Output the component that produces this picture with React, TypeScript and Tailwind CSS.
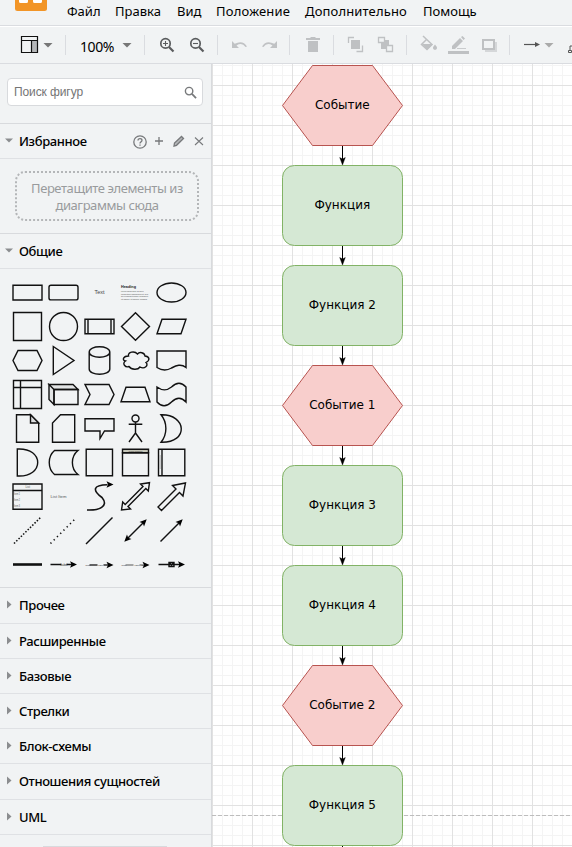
import React from "react";

const menus = [
  { label: "Файл", cls: "w-[48px]" },
  { label: "Правка", cls: "w-[62px]" },
  { label: "Вид", cls: "w-[39px]" },
  { label: "Положение", cls: "w-[89px] tracking-[0.2px]" },
  { label: "Дополнительно", cls: "w-[118px] tracking-[0.15px]" },
  { label: "Помощь", cls: "w-[70px]" },
];

function MenuBar() {
  return (
    <header className="flex h-[27px] shrink-0 border-b border-white bg-[#f1f3f4]">
      <div className="flex w-full border-b border-[#dadce0]">
        <svg width="67" height="25" className="shrink-0">
          <path d="M15 0H47V8.500Q47 11 44.500 11H17.500Q15 11 15 8.500Z" fill="#f29527" />
          <path d="M19 0H28V1.500Q28 3 26.500 3H20.500Q19 3 19 1.500ZM33 0H42V1.500Q42 3 40.500 3H34.500Q33 3 33 1.500Z" fill="#fff" />
        </svg>
        {menus.map((m) => (
          <span key={m.label} className={"shrink-0 whitespace-nowrap text-[13px] leading-[23px] text-black " + m.cls}>
            {m.label}
          </span>
        ))}
      </div>
    </header>
  );
}

function Tool({ x, w, children }: { x: number; w: number; children: React.ReactNode }) {
  return (
    <svg width={w} height="36" viewBox={`${x} 27 ${w} 36`} className="shrink-0" fill="none">
      {children}
    </svg>
  );
}

function Divider() {
  return <div className="mt-2 h-5 w-px shrink-0 bg-[#dadce0]" />;
}

function Magnifier({ cx, plus }: { cx: number; plus?: boolean }) {
  return (
    <g stroke="#5a5c5e">
      <circle cx={cx} cy="43.400" r="4.700" strokeWidth="1.700" />
      <path d={`M${cx + 3.5} 47L${cx + 8} 51.500`} strokeWidth="2.200" />
      <path d={`M${cx - 2.5} 43.500h5` + (plus ? `M${cx} 41v5` : "")} strokeWidth="1.100" />
    </g>
  );
}

function Toolbar() {
  return (
    <div className="flex h-[37px] shrink-0 overflow-hidden border-b border-[#dadce0] bg-[#f1f3f4]">
      <Tool x={0} w={65}>
        <path d="M32 41H37V52H32Z" fill="#b4b6b8" />
        <path d="M21.500 36.500H37.500V52.500H21.500ZM21.500 40.500H37.500M31.500 40.500V52.500" stroke="#111" strokeWidth="1.200" />
        <path d="M43.500 43H52.500L48 47.500Z" fill="#777" />
      </Tool>
      <Divider />
      <span className="w-[56px] shrink-0 pl-[14px] text-[14px] leading-[39px] tracking-[-0.4px] text-black">100%</span>
      <Tool x={122} w={22}>
        <path d="M122.500 43H131.500L127 47.500Z" fill="#777" />
      </Tool>
      <Divider />
      <Tool x={145} w={72}>
        <Magnifier cx={165.5} plus />
        <Magnifier cx={195.5} />
      </Tool>
      <Divider />
      <Tool x={218} w={71}>
        <path d="M232 41V48H239L236.500 45.500Q242 42 245.500 47L247 46.500Q243 39.500 234.700 43.700Z" fill="#c0c2c4" />
        <path d="M277 41V48H270L272.500 45.500Q267 42 263.500 47L262 46.500Q266 39.500 274.300 43.700Z" fill="#c0c2c4" />
      </Tool>
      <Divider />
      <Tool x={290} w={43}>
        <path d="M306 38H310L311 37H315L316 38H320V40H306ZM308 41H318V52H308Z" fill="#bfc1c3" />
      </Tool>
      <Divider />
      <Tool x={334} w={72}>
        <path d="M351 40H360V49H351Z" fill="#bfc1c3" />
        <path d="M348.500 43V37.500H354M356.500 51.500H362.500V45.500" stroke="#bfc1c3" strokeWidth="1.300" />
        <path d="M381 40H389V49H381Z" fill="#bfc1c3" />
        <path d="M378.500 37.500H384.500V42.500H378.500ZM386.500 45.500H392.500V51.500H386.500Z" fill="#f1f3f4" stroke="#bfc1c3" strokeWidth="1.300" />
      </Tool>
      <Divider />
      <Tool x={407} w={102}>
        <path d="M423 36L432 44.500L427 49.500L421.500 44.500L427 39" stroke="#bfc1c3" strokeWidth="1.500" />
        <path d="M422 44H433L427 50Z" fill="#bfc1c3" />
        <path d="M435 44.500Q439 49 435 50Q431 49 435 44.500Z" fill="#bfc1c3" />
        <path d="M452 49V46L460 38L463 41L455 49ZM461 37L462.500 36L465 38.500L463.500 40Z" fill="#bfc1c3" />
        <path d="M457 48.500H466" stroke="#c9cbcd" />
        <path d="M448 51H469V54H448Z" fill="#bfc1c3" />
        <path d="M485 42H497V52H485Z" fill="#d5d7d9" />
        <path d="M483 40H494V49H483Z" fill="#f1f3f4" stroke="#bfc1c3" strokeWidth="2" />
      </Tool>
      <Divider />
      <Tool x={510} w={62}>
        <path d="M524 44.500H536" stroke="#555" strokeWidth="1.200" />
        <path d="M535 42L540 44.500L535 47Z" fill="#555" />
        <path d="M544.500 43H553.500L549 47.500Z" fill="#aaa" />
        <path d="M568.500 50.500H571.500V52.500H568.500ZM570 50V46H573" stroke="#555" />
      </Tool>
    </div>
  );
}

function Tiny({ x, y, size, children, w, bold }: { x: number; y: number; size: number; children: string; w?: number; bold?: boolean }) {
  return (
    <text x={x} y={y} fontSize={size} textLength={w} lengthAdjust="spacingAndGlyphs" fill="#222" stroke="none" fontFamily="Liberation Sans, sans-serif" fontWeight={bold ? 700 : 400}>
      {children}
    </text>
  );
}

const head = (x: number, y: number, a: number) => (
  <path d="M1 0L-6 3.200L-4.500 0L-6 -3.200Z" fill="#000" stroke="none" transform={`translate(${x} ${y}) rotate(${a})`} />
);

const shapes: React.ReactNode[] = [
  <path d="M-14.500 -7.200H14.500V7.500H-14.500Z" />,
  <rect x="-14.500" y="-7.200" width="29" height="14.600" rx="2" />,
  <g opacity="0.85"><Tiny x={-5} y={1.5} size={5} w={10}>Text</Tiny></g>,
  <g>
    <Tiny x={-14.5} y={-4.8} size={4.4} w={15} bold>Heading</Tiny>
    <g opacity="0.8">
      <Tiny x={-14.5} y={-0.5} size={2.4} w={23}>Lorem ipsum dolor sit amet,</Tiny>
      <Tiny x={-14.5} y={2} size={2.4} w={27}>consectetur adipisicing elit, sed</Tiny>
      <Tiny x={-14.5} y={4.8} size={2.4} w={27}>do eiusmod tempor incididunt</Tiny>
      <Tiny x={-14.5} y={7} size={2.4} w={26}>ut labore et dolore magna</Tiny>
    </g>
  </g>,
  <ellipse rx="14.500" ry="9.500" />,

  <path d="M-14 -14H14V14H-14Z" />,
  <circle r="14" />,
  <path d="M-14.500 -7.300H14.500V7.300H-14.500ZM-11.500 -7.300V7.300M11.500 -7.300V7.300" />,
  <path d="M0 -13.700L14 0L0 13.700L-14 0Z" />,
  <path d="M-9.500 -7.300H14.500L9.500 7.300H-14.500Z" />,

  <path d="M-9.500 -10H9.500L14.500 0L9.500 10H-9.500L-14.500 0Z" />,
  <path d="M-10.200 -14L10.500 0L-10.200 14Z" />,
  <path d="M-10.300 -8.500V8.500C-10.300 15.500 10.300 15.500 10.300 8.500V-8.500C10.300 -15.500 -10.300 -15.500 -10.300 -8.500C-10.300 -1.500 10.300 -1.500 10.300 -8.500" />,
  <path d="M-7 -4.500C-12 -4.500 -14 -0.500 -10 0.500C-14 3 -10 7.500 -6.500 6C-4 9.500 2.500 9.500 4.500 6.500C9 9 13.500 5 10.500 2C15 -0.500 14 -4 9.500 -4.500C9 -8 4 -9 2 -6.500C-1 -10 -8 -8.500 -7 -4.500Z" />,
  <path d="M-14.500 -9.500H14.500V7C9.500 3 5 5 0 7.500C-5 10.500 -10 10 -14.500 7Z" />,

  <path d="M-14 -14H14V14H-14ZM-7 -14V14M-14 -7H14" />,
  <g>
    <path d="M-14.500 -10L-9.500 -5V10L-14.500 5ZM-14.500 -10H9.500L14.500 -5H-9.500Z" fill="#e2e4e5" />
    <path d="M-9.500 -5H14.500V10H-9.500Z" />
  </g>,
  <path d="M-14.500 -10H9.500L14.500 0L9.500 10H-14.500L-9.500 0Z" />,
  <path d="M-9.500 -7.300H9.500L14.500 7.300H-14.500Z" />,
  <path d="M-14.500 -7.500C-9 -3.500 -5 -3.500 0 -7.500C5 -12.500 10 -12.500 14.500 -7.500V7.500C10 2.500 5 2.500 0 7.500C-5 12.500 -10 12.500 -14.500 7.500Z" />,

  <g>
    <path d="M-11 -13.700H3L11.200 -5.500V13.700H-11Z" />
    <path d="M3 -13.700V-5.500H11.200Z" fill="#dcdedf" />
  </g>,
  <path d="M-3 -13.700H11.200V13.700H-11V-5.500Z" />,
  <path d="M-14.500 -9.700H14.500V2.500H5L0.500 10V2.500H-14.500Z" />,
  <path d="M3.500 -10A3.500 3.500 0 1 1 -3.500 -10A3.500 3.500 0 1 1 3.500 -10M0 -6.500V4.500L-6.500 13.500M0 4.500L6.500 13.500M-6.800 -4.200H6.800" />,
  <path d="M-10.500 -13.700C15 -14.500 18 14.500 -10.500 13.700C-4 6 -4 -6 -10.500 -13.700Z" />,

  <path d="M-10.200 -13.500C17 -15 17 15 -10.200 13.500Z" />,
  <path d="M-9 -12H14.500C7 -6 7 6 14.500 12H-9C-16 6 -16 -6 -9 -12Z" />,
  <path d="M-13.300 -13.300H13V13.300H-13.300Z" />,
  <g>
    <path d="M-13 -13.300H13V-9.800H-13Z" fill="#c5c6b9" />
    <path d="M-13 -9.800H13V13.300H-13Z" />
    <Tiny x={-7} y={-10.5} size={2.5} w={14}>Vertical Container</Tiny>
  </g>,
  <g>
    <path d="M-13 -13.300H13.300V13.300H-13ZM-9.500 -13.300V13.300" />
    <path d="M-11.300 -7V7" stroke="#888" strokeDasharray="1 1" strokeWidth="1" />
  </g>,

  <g>
    <path d="M-14.500 -12.500H14.500V12.800H-14.500ZM-14.500 -6H14.500" />
    <g opacity="0.75">
      <Tiny x={-2} y={-8.5} size={3} w={4.5}>List</Tiny>
      <Tiny x={-13.5} y={-2} size={3} w={6}>Item 1</Tiny>
      <Tiny x={-13.5} y={4} size={3} w={6}>Item 2</Tiny>
      <Tiny x={-13.5} y={10} size={3} w={6}>Item 3</Tiny>
    </g>
  </g>,
  <g opacity="0.75"><Tiny x={-13} y={1.5} size={4} w={16}>List Item</Tiny></g>,
  <g>
    <path d="M-12.500 13.500C-1 14 10 10 2.500 1C-7 -6 -7 -11.500 8 -11.700" strokeWidth="1.600" />
    {head(13, -12, 0)}
  </g>,
  <path d="M-14 13.500L-12.800 5.500L-10.300 8L7.500 -10L5 -12.500L14 -13.800L12.800 -5.500L10.300 -8L-7.500 10L-5 12.500Z" />,
  <path d="M-13.500 10.500L4.500 -7.500L1 -11L14 -13.500L11.500 -0.500L8 -4L-10 14Z" />,

  <path d="M-13.500 13L13 -13" strokeDasharray="1.500 1.700" strokeWidth="1.600" />,
  <path d="M-13 13L13 -13" strokeDasharray="1.300 3.300" strokeWidth="1.600" />,
  <path d="M-13.500 13.500L13 -13" strokeWidth="1.500" />,
  <g><path d="M-8 8L8 -8" />{head(10.5, -10.5, -45)}{head(-10.5, 10.5, 135)}</g>,
  <g><path d="M-11 11L8 -8" />{head(10.5, -10.5, -45)}</g>,

  <path d="M-14.500 0H14.500" strokeWidth="2.600" />,
  <g><path d="M-13 0H-2M3 0H10" /><Tiny x={-3} y={1} size={3} w={7}>Label</Tiny>{head(12.5, 0, 0)}</g>,
  <g><path d="M-10 0.500H-2M4 0.500H10" stroke="#333" /><Tiny x={-14} y={1} size={2.5} w={5}>Source</Tiny><Tiny x={-1.5} y={1} size={2.5} w={5}>Label</Tiny>{head(13, 0.5, 0)}</g>,
  <g><path d="M-10 0.500H-2M4 0.500H10" stroke="#555" strokeWidth="1" /><Tiny x={-14} y={1} size={2.5} w={5}>Source</Tiny><Tiny x={-1} y={1} size={2.5} w={5}>Label</Tiny><Tiny x={6} y={1} size={2.5} w={5}>Target</Tiny>{head(13, 0.5, 0)}</g>,
  <g><path d="M-13 0H9M-2.500 -2H2.500V2H-2.500ZM-2 -1.500L0 0.500L2 -1.500" />{head(12.5, 0, 0)}</g>,
];

function Section({ title, cls, open }: { title: string; cls: string; open?: boolean }) {
  return (
    <div className={"flex shrink-0 items-center border-b border-[#dfe1e4] " + cls}>
      <svg width="19" height="14" className="shrink-0">
        {open ? <path d="M5 4.500H13L9 8.500Z" fill="#8b8d8f" /> : <path d="M7 2.500L11.500 6.500L7 10.500Z" fill="#8b8d8f" />}
      </svg>
      <span className="whitespace-nowrap text-[13px] font-medium leading-[18px] tracking-[-0.38px] text-black">{title}</span>
      {title === "Избранное" && (
        <svg width="79" height="20" viewBox="132 131 79 20" className="ml-auto shrink-0" fill="none" stroke="#77797b" strokeWidth="1.300">
          <circle cx="140" cy="142" r="6.200" />
          <path d="M138 140.600Q138 138.600 140 138.600Q142 138.600 142 140.300Q142 141.300 141 141.800Q140 142.300 140 143.600M140 144.600V145.800" />
          <path d="M155 141H163M159 137V145" />
          <path d="M174 146L174.500 143L181.500 136.500L183.500 138.500L176.500 145.300Z" fill="#b4b6b8" />
          <path d="M195 137.500L203 145M203 137.500L195 145" strokeWidth="1.100" />
        </svg>
      )}
    </div>
  );
}

const categories = [
  { title: "Прочее", cls: "h-9 pb-px" },
  { title: "Расширенные", cls: "h-[35px]" },
  { title: "Базовые", cls: "h-[35px]" },
  { title: "Стрелки", cls: "h-[35px]" },
  { title: "Блок-схемы", cls: "h-[35px]" },
  { title: "Отношения сущностей", cls: "h-9 pb-px" },
  { title: "UML", cls: "h-[35px]" },
];

function Sidebar() {
  return (
    <aside className="flex w-[212px] shrink-0 flex-col overflow-hidden border-r border-[#d8dadd] bg-[#f1f3f4]">
      <div className="h-[60px] shrink-0 border-b border-[#d8dadd] px-[7px] pt-[14px]">
        <div className="flex h-7 w-[196px] items-center justify-between rounded-[4px] border border-[#d8dadd] bg-white pl-[6px] pr-[5px]">
          <span className="font-['Liberation_Sans',sans-serif] text-[12px] tracking-[-0.1px] text-[#757575]">Поиск фигур</span>
          <svg width="13" height="13" viewBox="0 0 14 14" fill="none" stroke="#77797b">
            <circle cx="5.500" cy="5.500" r="4" strokeWidth="1.500" />
            <path d="M8.500 8.500L13 13" strokeWidth="1.900" />
          </svg>
        </div>
      </div>
      <Section title="Избранное" cls="h-[35px]" open />
      <div className="h-[75px] shrink-0 border-b border-[#d8dadd] pl-[15px] pt-3">
        <div className="relative h-[50px] w-[184px] text-center text-[13px] leading-[17px] tracking-[-0.42px] text-[#999b9d]">
          <svg className="absolute inset-0" width="184" height="50">
            <rect x="1" y="1" width="182" height="48" rx="9" fill="none" stroke="#b4b6b8" strokeWidth="2" strokeDasharray="2 2" />
          </svg>
          <p className="pt-[9px]">Перетащите элементы из<br />диаграммы сюда</p>
        </div>
      </div>
      <Section title="Общие" cls="h-[35px]" open />
      <div className="h-[319px] shrink-0 border-b border-[#d8dadd] pl-[9px] pt-[6px]">
        <div className="grid w-[180px] grid-cols-5">
          {shapes.map((s, i) => (
            <svg key={i} width="36" height="34" viewBox="-18.500 -17.500 36 34" fill="none" stroke="#111" strokeWidth="1.400">
              {s}
            </svg>
          ))}
        </div>
      </div>
      {categories.map((c) => <Section key={c.title} title={c.title} cls={c.cls} />)}
      <div className="ml-[43px] mt-[11px] h-1 w-[124px] shrink-0 bg-[#d8dadd]" />
    </aside>
  );
}

const nodes = [
  { label: "Событие", event: true },
  { label: "Функция" },
  { label: "Функция 2" },
  { label: "Событие 1", event: true },
  { label: "Функция 3" },
  { label: "Функция 4" },
  { label: "Событие 2", event: true },
  { label: "Функция 5" },
];

function Canvas() {
  return (
    <main className="min-w-0 flex-1 bg-white">
      <svg width="360" height="783" viewBox="212 64 360 783" className="block">
        <defs>
          <pattern id="grid" x="252" y="85" width="40" height="40" patternUnits="userSpaceOnUse">
            <path d="M10.500 0V40M20.500 0V40M30.500 0V40M0 10.500H40M0 20.500H40M0 30.500H40" stroke="#f4f4f4" />
            <path d="M0.500 0V40M0 0.500H40" stroke="#e2e2e2" />
          </pattern>
        </defs>
        <rect x="212" y="64" width="360" height="783" fill="url(#grid)" />
        <path d="M212 815.500H572" stroke="#bdbdbd" strokeDasharray="4 2" />
        {nodes.map((n, i) => {
          const y = 65.5 + i * 100;
          return (
            <g key={n.label}>
              {n.event ? (
                <path d={`M312.500 ${y}H372.500L402.500 ${y + 40}L372.500 ${y + 80}H312.500L282.500 ${y + 40}Z`} fill="#f8cecc" stroke="#b85450" />
              ) : (
                <rect x="282.500" y={y} width="120" height="80" rx="12" fill="#d5e8d4" stroke="#82b366" />
              )}
              <path d={`M342.500 ${y + 80.5}V${y + 95}`} stroke="#000" />
              <path d={`M342.500 ${y + 99.5}L339.700 ${y + 92}L342.500 ${y + 93.5}L345.300 ${y + 92}Z`} fill="#000" stroke="#000" strokeWidth="0.400" />
              <text x="342.300" y={y + 43.5} textAnchor="middle" fontSize="12" fill="#000" fontFamily="DejaVu Sans, sans-serif">{n.label}</text>
            </g>
          );
        })}
      </svg>
    </main>
  );
}

export default function App() {
  return (
    <div className="flex h-[847px] w-[572px] flex-col overflow-hidden bg-[#f1f3f4] font-['Noto_Sans',sans-serif]">
      <MenuBar />
      <Toolbar />
      <div className="flex min-h-0 flex-1">
        <Sidebar />
        <Canvas />
      </div>
    </div>
  );
}
